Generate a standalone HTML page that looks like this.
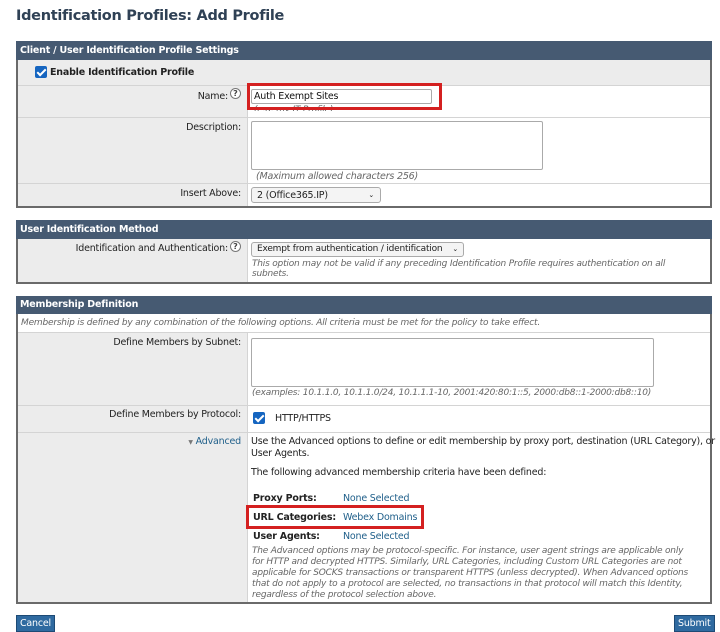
<!DOCTYPE html>
<html><head><meta charset="utf-8"><style>
*{margin:0;padding:0;box-sizing:border-box}
body{width:720px;height:632px;background:#fff;font-family:"DejaVu Sans","Liberation Sans",sans-serif;font-size:9.5px;letter-spacing:-0.2px;color:#222;position:relative;overflow:hidden}
.a{position:absolute;white-space:nowrap}
.box{position:absolute;left:16px;width:696px;border:2px solid #6a6a6a;border-top:0}
.hd{position:absolute;left:16px;width:696px;background:#465a72;color:#fff;font-weight:bold;font-size:9.5px;padding:4px 4px;height:19px}
.lab{position:absolute;background:#ececec;border-bottom:1px solid #d4d4d4}
.val{position:absolute;background:#fff;border-bottom:1px solid #d4d4d4}
.r{text-align:right}
.it{font-style:italic;color:#666}
.q{display:inline-block;width:11px;height:11px;border:1px solid #777;border-radius:50%;font-size:8px;line-height:9px;text-align:center;font-weight:bold;color:#444;background:#fff;vertical-align:top;letter-spacing:0}
.cb{position:absolute;width:12px;height:12px;background:#1565c0;border-radius:2px}
.cb:after{content:"";position:absolute;left:4px;top:1px;width:3px;height:7px;border:solid #fff;border-width:0 2px 2px 0;transform:rotate(45deg)}
.ta{position:absolute;border:1px solid #aaa;border-radius:2px;background:#fff}
.sel{position:absolute;border:1px solid #aaa;border-radius:3px;background:#f4f4f4;padding:2px 5px;font-size:9.5px;white-space:nowrap}
.red{position:absolute;border:3px solid #d42020}
.lnk{color:#1f5f8a}
.btn{position:absolute;background:#2f6aa0;color:#fff;font-size:9.5px;padding:2px 3px;border:1px solid #1d4a75}
</style></head><body>
<div class="a" style="left:16px;top:8px;font-size:14.5px;letter-spacing:-0.3px;font-weight:bold;color:#2f4155">Identification Profiles: Add Profile</div>

<!-- box 1 -->
<div class="hd" style="top:41px">Client / User Identification Profile Settings</div>
<div class="box" style="top:60px;height:148px;background:#fff"></div>
<div class="lab" style="left:18px;top:60px;width:692px;height:26px"></div>
<div class="cb" style="left:35px;top:66px"></div>
<div class="a" style="left:50px;top:67px;font-weight:bold">Enable Identification Profile</div>
<div class="lab" style="left:18px;top:86px;width:229px;height:32px"></div>
<div class="val" style="left:247px;top:86px;width:463px;height:32px;border-left:1px solid #d4d4d4"></div>
<div class="a r" style="left:18px;width:210px;top:91px">Name:</div>
<div class="q" style="position:absolute;left:230px;top:88px">?</div>
<div class="ta" style="left:251px;top:89px;width:181px;height:15px"></div>
<div class="a" style="left:254px;top:91px;color:#111">Auth Exempt Sites</div>
<div class="a it" style="left:254px;top:105px;font-size:9px;height:6px;overflow:hidden">(e.g. my IT Profile)</div>
<div class="red" style="left:247px;top:83px;width:195px;height:27px"></div>
<div class="lab" style="left:18px;top:118px;width:229px;height:66px"></div>
<div class="val" style="left:247px;top:118px;width:463px;height:66px;border-left:1px solid #d4d4d4"></div>
<div class="a r" style="left:18px;width:223px;top:122px">Description:</div>
<div class="ta" style="left:251px;top:121px;width:292px;height:49px"></div>
<div class="a it" style="left:256px;top:171px">(Maximum allowed characters 256)</div>
<div class="lab" style="left:18px;top:184px;width:229px;height:22px;border:0"></div>
<div class="val" style="left:247px;top:184px;width:463px;height:22px;border:0;border-left:1px solid #d4d4d4"></div>
<div class="a r" style="left:18px;width:223px;top:188px">Insert Above:</div>
<div class="sel" style="left:251px;top:187px;width:130px;height:16px">2 (Office365.IP) <span style="position:absolute;right:6px;font-size:7px;top:3px">&#8964;</span></div>

<!-- box 2 -->
<div class="hd" style="top:220px">User Identification Method</div>
<div class="box" style="top:239px;height:45px;background:#fff"></div>
<div class="lab" style="left:18px;top:239px;width:229px;height:43px;border:0"></div>
<div class="val" style="left:247px;top:239px;width:463px;height:43px;border:0;border-left:1px solid #d4d4d4"></div>
<div class="a r" style="left:18px;width:210px;top:243px">Identification and Authentication:</div>
<div class="q" style="position:absolute;left:230px;top:241px">?</div>
<div class="sel" style="left:251px;top:242px;width:213px;height:15px;padding-top:1px;font-size:9px">Exempt from authentication / identification <span style="position:absolute;right:5px;font-size:7px;top:2px">&#8964;</span></div>
<div class="a it" style="left:252px;top:259px;font-size:9px">This option may not be valid if any preceding Identification Profile requires authentication on all</div>
<div class="a it" style="left:252px;top:269px;font-size:9px">subnets.</div>

<!-- box 3 -->
<div class="hd" style="top:296px;height:18px;padding-top:3px">Membership Definition</div>
<div class="box" style="top:314px;height:290px;background:#fff"></div>
<div class="val" style="left:18px;top:314px;width:692px;height:19px"></div>
<div class="a it" style="left:21px;top:318px;font-size:9px">Membership is defined by any combination of the following options. All criteria must be met for the policy to take effect.</div>
<div class="lab" style="left:18px;top:333px;width:229px;height:73px"></div>
<div class="val" style="left:247px;top:333px;width:463px;height:73px;border-left:1px solid #d4d4d4"></div>
<div class="a r" style="left:18px;width:223px;top:337px">Define Members by Subnet:</div>
<div class="ta" style="left:251px;top:338px;width:403px;height:49px"></div>
<div class="a it" style="left:252px;top:388px;font-size:9px">(examples: 10.1.1.0, 10.1.1.0/24, 10.1.1.1-10, 2001:420:80:1::5, 2000:db8::1-2000:db8::10)</div>
<div class="lab" style="left:18px;top:406px;width:229px;height:27px"></div>
<div class="val" style="left:247px;top:406px;width:463px;height:27px;border-left:1px solid #d4d4d4"></div>
<div class="a r" style="left:18px;width:223px;top:409px">Define Members by Protocol:</div>
<div class="cb" style="left:253px;top:412px"></div>
<div class="a" style="left:275px;top:413px">HTTP/HTTPS</div>
<div class="lab" style="left:18px;top:433px;width:229px;height:169px;border:0"></div>
<div class="val" style="left:247px;top:433px;width:463px;height:169px;border:0;border-left:1px solid #d4d4d4"></div>
<div class="a r lnk" style="left:18px;width:223px;top:436px"><span style="font-size:6px;color:#777">&#9660;</span> Advanced</div>
<div class="a" style="left:251px;top:436px">Use the Advanced options to define or edit membership by proxy port, destination (URL Category), or</div>
<div class="a" style="left:251px;top:448px">User Agents.</div>
<div class="a" style="left:251px;top:467px">The following advanced membership criteria have been defined:</div>
<div class="a" style="left:253px;top:493px;font-weight:bold">Proxy Ports:</div>
<div class="a lnk" style="left:343px;top:493px">None Selected</div>
<div class="a" style="left:253px;top:512px;font-weight:bold">URL Categories:</div>
<div class="a lnk" style="left:343px;top:512px">Webex Domains</div>
<div class="red" style="left:246px;top:505px;width:178px;height:24px"></div>
<div class="a" style="left:253px;top:531px;font-weight:bold">User Agents:</div>
<div class="a lnk" style="left:343px;top:531px">None Selected</div>
<div class="a it" style="left:252px;top:546px;font-size:9px;line-height:11px">The Advanced options may be protocol-specific. For instance, user agent strings are applicable only<br>for HTTP and decrypted HTTPS. Similarly, URL Categories, including Custom URL Categories are not<br>applicable for SOCKS transactions or transparent HTTPS (unless decrypted). When Advanced options<br>that do not apply to a protocol are selected, no transactions in that protocol will match this Identity,<br>regardless of the protocol selection above.</div>

<div class="btn" style="left:16px;top:615px">Cancel</div>
<div class="btn" style="left:674px;top:615px">Submit</div>
</body></html>
